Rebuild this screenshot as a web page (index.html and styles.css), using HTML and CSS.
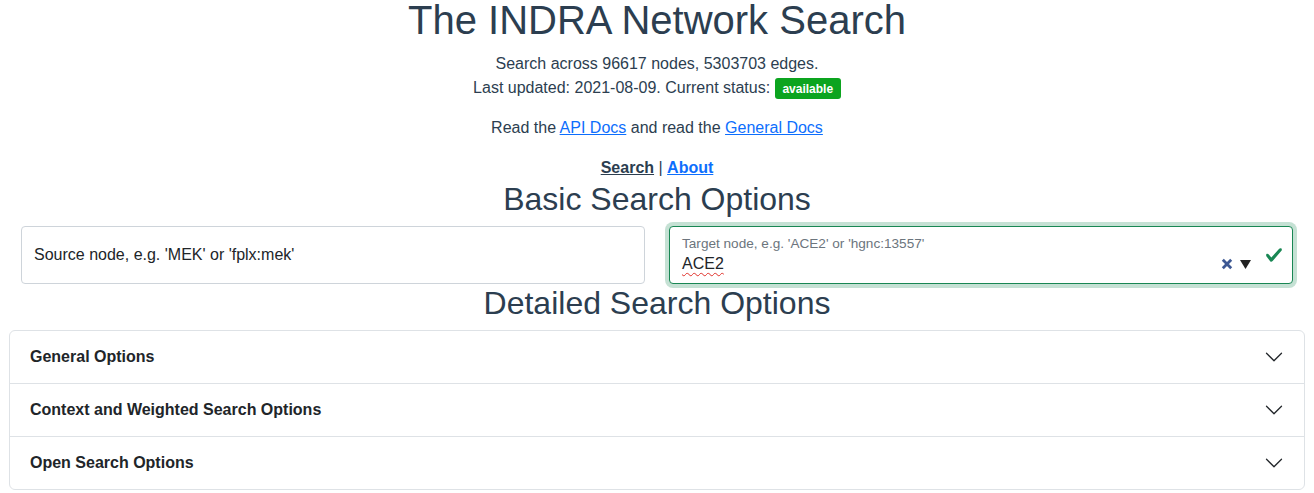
FILE: index.html
```html
<!DOCTYPE html>
<html lang="en">
<head>
<meta charset="utf-8">
<title>The INDRA Network Search</title>
<link rel="stylesheet" href="styles.css">
</head>
<body>
<div class="app">
  <h1 class="title">The INDRA Network Search</h1>
  <div class="intro">
    <div class="line">Search across 96617 nodes, 5303703 edges.</div>
    <div class="line">Last updated: 2021-08-09. Current status: <span class="badge">available</span></div>
  </div>
  <p class="docs">Read the <a href="#" class="link">API Docs</a> and read the <a href="#" class="link">General Docs</a></p>
  <nav class="nav"><a href="#" class="nav-link active">Search</a> | <a href="#" class="nav-link">About</a></nav>
  <h2 class="section">Basic Search Options</h2>
  <div class="inputs">
    <div class="field">
      <div class="field-label">Source node, e.g. 'MEK' or 'fplx:mek'</div>
    </div>
    <div class="field valid">
      <div class="field-small">Target node, e.g. 'ACE2' or 'hgnc:13557'</div>
      <div class="field-value"><span class="value-text">ACE2</span></div>
      <div class="field-controls">
        <svg class="clear-icon" width="12" height="12" viewBox="0 0 12 12"><path d="M1.8 1.8 10.2 10.2M10.2 1.8 1.8 10.2" stroke="#3d5893" stroke-width="2.8" stroke-linecap="butt"/></svg>
        <svg class="caret-icon" width="11" height="9" viewBox="0 0 11 9"><path d="M0 0H11L5.5 9Z" fill="#222"/></svg>
      </div>
      <svg class="check-icon" width="18" height="18" viewBox="0 0 8 8"><path fill="#198754" d="M2.3 6.73.6 4.53c-.4-1.04.46-1.4 1.1-.8l1.1 1.4 3.4-3.8c.6-.63 1.6-.27 1.2.7l-4 4.6c-.43.5-.8.4-1.1.1z"/></svg>
    </div>
  </div>
  <h2 class="section detailed">Detailed Search Options</h2>
  <div class="accordion">
    <div class="acc-item">
      <span class="acc-title">General Options</span>
      <svg class="chev" width="20" height="20" viewBox="0 0 16 16"><path fill="#212529" fill-rule="evenodd" d="M1.646 4.646a.5.5 0 0 1 .708 0L8 10.293l5.646-5.647a.5.5 0 0 1 .708.708l-6 6a.5.5 0 0 1-.708 0l-6-6a.5.5 0 0 1 0-.708z"/></svg>
    </div>
    <div class="acc-item">
      <span class="acc-title">Context and Weighted Search Options</span>
      <svg class="chev" width="20" height="20" viewBox="0 0 16 16"><path fill="#212529" fill-rule="evenodd" d="M1.646 4.646a.5.5 0 0 1 .708 0L8 10.293l5.646-5.647a.5.5 0 0 1 .708.708l-6 6a.5.5 0 0 1-.708 0l-6-6a.5.5 0 0 1 0-.708z"/></svg>
    </div>
    <div class="acc-item">
      <span class="acc-title">Open Search Options</span>
      <svg class="chev" width="20" height="20" viewBox="0 0 16 16"><path fill="#212529" fill-rule="evenodd" d="M1.646 4.646a.5.5 0 0 1 .708 0L8 10.293l5.646-5.647a.5.5 0 0 1 .708.708l-6 6a.5.5 0 0 1-.708 0l-6-6a.5.5 0 0 1 0-.708z"/></svg>
    </div>
  </div>
</div>
</body>
</html>
```

FILE: styles.css
```css
* { box-sizing: border-box; }
html, body { margin: 0; padding: 0; background: #fff; }
body {
  font-family: "Liberation Sans", Arial, Helvetica, sans-serif;
  font-size: 16px;
  line-height: 1.5;
  color: #2c3e50;
}
.app { text-align: center; }
.title {
  margin: 0;
  font-size: 40px;
  font-weight: 400;
  line-height: 40px;
  color: #2c3e50;
}
.intro { margin-top: 11.5px; }
.line { line-height: 24px; }
.badge {
  display: inline-block;
  padding: 0.35em 0.65em;
  font-size: 12px;
  font-weight: 700;
  line-height: 1;
  color: #fff;
  background: #0ca41f;
  border-radius: 3px;
  vertical-align: 0;
}
.docs { margin: 16px 0 0; line-height: 24px; }
.link { color: #0d6efd; text-decoration: underline; }
.nav { margin-top: 16.5px; line-height: 24px; }
.nav-link { font-weight: 700; color: #0d6efd; text-decoration: underline; }
.nav-link.active { color: #2c3e50; }
.section {
  margin: 0 0 8px;
  font-size: 32px;
  font-weight: 400;
  line-height: 38.4px;
  color: #2c3e50;
}
.section.detailed { margin-bottom: 7px; }
.inputs {
  display: flex;
  gap: 24px;
  padding: 0 21px;
  text-align: left;
}
.field {
  position: relative;
  flex: 1 1 0;
  height: 58px;
  border: 1px solid #ced4da;
  border-radius: 4px;
  background: #fff;
  color: #212529;
}
.field-label {
  padding: 16px 12px;
  line-height: 24px;
  font-size: 16px;
  color: #212529;
}
.field.valid {
  border-color: #198754;
  box-shadow: 0 0 0 4px rgba(25, 135, 84, 0.25);
}
.field-small {
  padding: 9px 12px 0;
  font-size: 13.6px;
  line-height: 16px;
  color: #6c757d;
}
.field-value {
  padding: 1px 12px 0;
  font-size: 16px;
  line-height: 22px;
  color: #212529;
}
.value-text {
  text-decoration: underline wavy #e0302a;
  text-decoration-thickness: 1px;
  text-underline-offset: 3px;
}
.field-controls {
  position: absolute;
  right: 41px;
  top: 31px;
  display: flex;
  align-items: center;
  gap: 7px;
}
.check-icon {
  position: absolute;
  right: 9px;
  top: 19px;
}
.accordion {
  margin: 0 9px;
  border: 1px solid #dee2e6;
  border-radius: 6px;
  text-align: left;
}
.acc-item {
  display: flex;
  align-items: center;
  justify-content: space-between;
  height: 53px;
  padding: 1px 20px 0;
  border-top: 1px solid #dee2e6;
  color: #212529;
  font-weight: 700;
}
.acc-item:first-child { border-top: 0; height: 52px; }
.acc-title { line-height: 24px; }
.chev { flex: none; }
```
